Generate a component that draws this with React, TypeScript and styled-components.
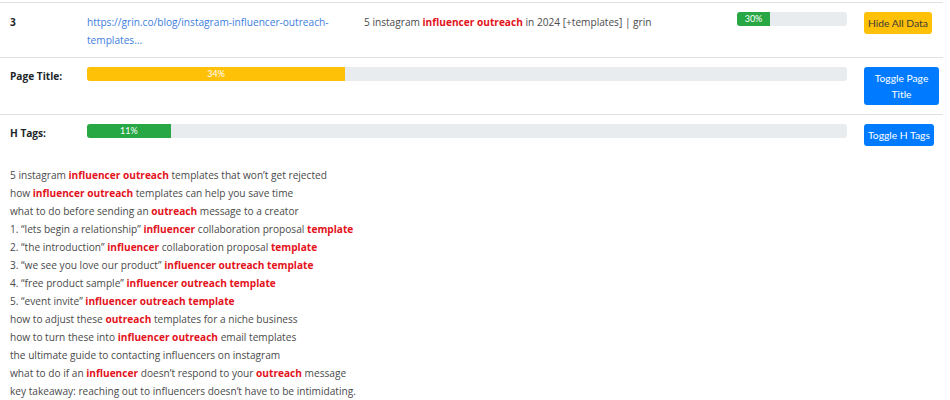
import React from "react";
import styled, { createGlobalStyle } from "styled-components";

const Global = createGlobalStyle`
  html, body { margin: 0; padding: 0; background: #fff; }
  body { font-family: "Open Sans", "Noto Sans", sans-serif; font-size: 10.15px; color: #4a4a4a; }
`;

const Page = styled.div`
  padding-top: 2px;
  width: 943px;
`;

const Row = styled.div`
  display: grid;
  grid-template-columns: 77px 277px 373px 127px 1fr;
  padding-left: 10px;
  border-top: 1px solid #dee2e6;
  &:last-of-type { border-bottom: 1px solid #dee2e6; }
`;

const Cell = styled.div<{ $span?: number; $right?: number }>`
  padding: 9px ${(p) => p.$right ?? 0}px 9px 0;
  line-height: 18px;
  min-width: 0;
  ${(p) => (p.$span ? `grid-column: span ${p.$span};` : "")}
`;

const TextCell = styled(Cell)`
  padding-top: 10px;
  padding-bottom: 8px;
`;

const Label = styled.span`
  font-weight: 700;
  color: #212529;
`;

const Link = styled.a`
  color: #3d7ede;
  text-decoration: none;
  display: block;
  padding-right: 20px;
`;

const Track = styled.div<{ $width?: number }>`
  display: flex;
  height: 14px;
  border-radius: 3px;
  background: #e9ecef;
  overflow: hidden;
  ${(p) => (p.$width ? `width: ${p.$width}px;` : "")}
`;

const Fill = styled.div<{ $color: string }>`
  background: ${(p) => p.$color};
  color: #fff;
  font-family: Lato, sans-serif;
  font-size: 9px;
  line-height: 14px;
  text-align: center;
  white-space: nowrap;
`;

const Button = styled.button<{ $variant: "warning" | "primary" }>`
  font-family: Lato, sans-serif;
  font-size: 10.3px;
  line-height: 16px;
  padding: 3px 4px;
  border: none;
  border-radius: 3px;
  background: ${(p) => (p.$variant === "warning" ? "#ffc107" : "#007bff")};
  color: ${(p) => (p.$variant === "warning" ? "#3a3a3a" : "#fff")};
  text-align: center;
  cursor: pointer;
`;

const Headings = styled.div`
  padding: 11px 0 0 10px;
  line-height: 18px;
`;

const Line = styled.div`
  white-space: nowrap;
`;

const Hl = styled.b`
  color: #e3121b;
  font-weight: 700;
`;

const lines: (string | [string])[][] = [
  ["5 instagram ", ["influencer outreach"], " templates that won\u2019t get rejected"],
  ["how ", ["influencer outreach"], " templates can help you save time"],
  ["what to do before sending an ", ["outreach"], " message to a creator"],
  ["1. \u201clets begin a relationship\u201d ", ["influencer"], " collaboration proposal ", ["template"]],
  ["2. \u201cthe introduction\u201d ", ["influencer"], " collaboration proposal ", ["template"]],
  ["3. \u201cwe see you love our product\u201d ", ["influencer outreach template"]],
  ["4. \u201cfree product sample\u201d ", ["influencer outreach template"]],
  ["5. \u201cevent invite\u201d ", ["influencer outreach template"]],
  ["how to adjust these ", ["outreach"], " templates for a niche business"],
  ["how to turn these into ", ["influencer outreach"], " email templates"],
  ["the ultimate guide to contacting influencers on instagram"],
  ["what to do if an ", ["influencer"], " doesn\u2019t respond to your ", ["outreach"], " message"],
  ["key takeaway: reaching out to influencers doesn\u2019t have to be intimidating."],
];

export default function App() {
  return (
    <>
      <Global />
      <Page>
        <Row>
          <TextCell><Label>3</Label></TextCell>
          <TextCell>
            <Link href="#">https://grin.co/blog/instagram-influencer-outreach-templates...</Link>
          </TextCell>
          <TextCell>
            5 instagram <Hl>influencer outreach</Hl> in 2024 [+templates] | grin
          </TextCell>
          <Cell>
            <Track $width={110}>
              <Fill $color="#28a745" style={{ width: "30%" }}>30%</Fill>
            </Track>
          </Cell>
          <Cell><Button $variant="warning">Hide All Data</Button></Cell>
        </Row>
        <Row>
          <Cell><Label>Page Title:</Label></Cell>
          <Cell $span={3} $right={17}>
            <Track>
              <Fill $color="#ffc107" style={{ width: "34%" }}>34%</Fill>
            </Track>
          </Cell>
          <Cell $right={4}><Button $variant="primary">Toggle Page Title</Button></Cell>
        </Row>
        <Row>
          <Cell><Label>H Tags:</Label></Cell>
          <Cell $span={3} $right={17}>
            <Track>
              <Fill $color="#28a745" style={{ width: "11%" }}>11%</Fill>
            </Track>
          </Cell>
          <Cell $right={4}><Button $variant="primary">Toggle H Tags</Button></Cell>
        </Row>
        <Headings>
          {lines.map((parts, i) => (
            <Line key={i}>
              {parts.map((p, j) =>
                typeof p === "string" ? <React.Fragment key={j}>{p}</React.Fragment> : <Hl key={j}>{p[0]}</Hl>
              )}
            </Line>
          ))}
        </Headings>
      </Page>
    </>
  );
}
